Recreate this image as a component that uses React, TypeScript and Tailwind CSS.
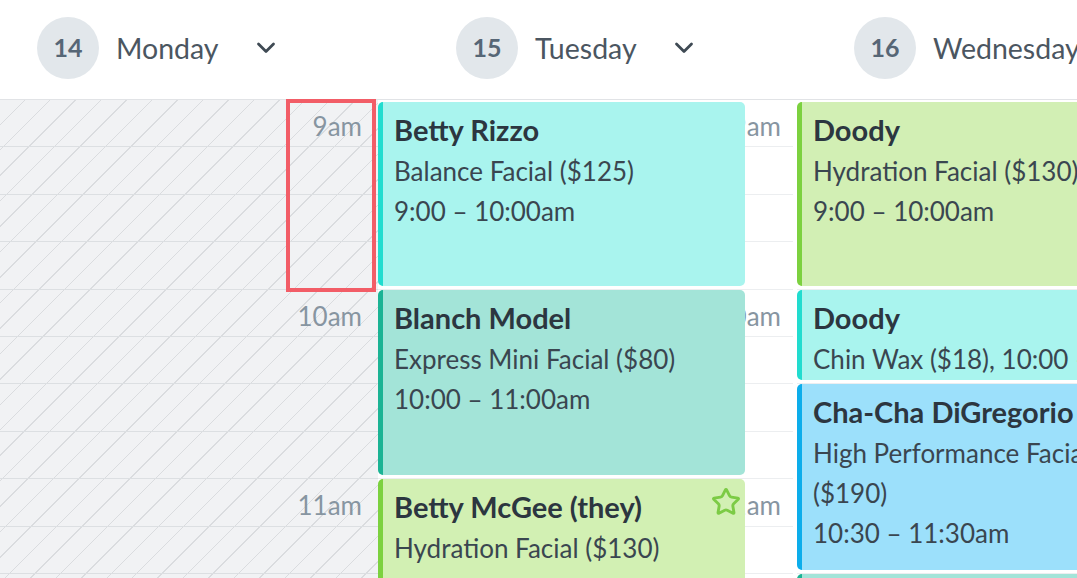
import React from "react";
import { Star } from "lucide-react";

const ROWS = [
  "row-start-1",
  "row-start-2",
  "row-start-3",
  "row-start-4",
  "row-start-5",
  "row-start-6",
  "row-start-7",
  "row-start-8",
  "row-start-9",
  "row-start-10",
  "row-start-11",
];

function Chevron() {
  return (
    <svg width="20" height="12" viewBox="0 0 20 12" fill="none">
      <path
        d="M2.5 2L10 9.5L17.5 2"
        stroke="#3f4a54"
        strokeWidth="2.8"
        strokeLinecap="round"
        strokeLinejoin="round"
      />
    </svg>
  );
}

function DayHeader({
  num,
  name,
  chevron,
  width,
}: {
  num: string;
  name: string;
  chevron: boolean;
  width: string;
}) {
  return (
    <div className={`${width} shrink-0 flex items-start pt-[17px] pl-[37px]`}>
      <div className="w-[62px] h-[62px] shrink-0 rounded-full bg-[#e2e7eb] flex items-center justify-center text-[25px] font-bold text-[#566676]">
        {num}
      </div>
      <div className="ml-[17px] h-[62px] flex items-center text-[28.5px] text-[#4b5661] whitespace-nowrap">
        {name}
      </div>
      {chevron && (
        <div className="ml-[37px] h-[62px] flex items-center">
          <Chevron />
        </div>
      )}
    </div>
  );
}

function Lines({ cls, extra }: { cls: string; extra?: string }) {
  return (
    <>
      {ROWS.map((r) => (
        <div key={r} className={`${r} col-start-1 ${extra ?? ""} border-b ${cls}`} />
      ))}
    </>
  );
}

function TimeLabel({ row, text, extra }: { row: string; text: string; extra?: string }) {
  return (
    <div
      className={`${row} col-start-1 ${extra ?? ""} justify-self-end self-start pr-4 pt-[10px] text-[26px] leading-[32px] text-[#8795a1] whitespace-nowrap`}
    >
      {text}
    </div>
  );
}

function Event({
  place,
  color,
  name,
  lines,
  star,
}: {
  place: string;
  color: string;
  name: string;
  lines: string[];
  star?: boolean;
}) {
  return (
    <div
      className={`${place} ${color} col-start-1 border-l-[5px] rounded-[5px] pl-[11px] pt-[7px] overflow-hidden min-w-0`}
    >
      <div className="flex justify-between items-start pr-[4px]">
        <div className="text-[29px] font-bold leading-[42px] text-[#2c3640] whitespace-nowrap">
          {name}
        </div>
        {star && (
          <Star size={30} strokeWidth={2.3} color="#7ccb45" className="shrink-0 mt-[1px]" />
        )}
      </div>
      {lines.map((l, i) => (
        <div key={i} className="text-[26px] leading-[40px] text-[#3a4650] whitespace-nowrap">
          {l}
        </div>
      ))}
    </div>
  );
}

export default function App() {
  return (
    <div className="w-[1077px] h-[578px] overflow-hidden bg-white [font-family:Lato,'Noto_Sans',sans-serif]">
      <div className="flex h-[100px] border-b border-[#e1e3e6]">
        <DayHeader num="14" name="Monday" chevron width="w-[419px]" />
        <DayHeader num="15" name="Tuesday" chevron width="w-[398px]" />
        <DayHeader num="16" name="Wednesday" chevron={false} width="w-[420px]" />
      </div>

      <div className="flex">
        {/* Monday */}
        <div className="w-[378px] shrink-0 grid grid-cols-1 grid-rows-[repeat(11,47.4px)] [background-image:repeating-linear-gradient(135deg,#f1f2f4_0px,#f1f2f4_17px,#dadcdf_17px,#dadcdf_18px)]">
          <Lines cls="border-[#dcdfe2]" />
          <TimeLabel row="row-start-1" text="9am" />
          <TimeLabel row="row-start-5" text="10am" />
          <TimeLabel row="row-start-9" text="11am" />
          <div className="row-start-1 row-span-4 col-start-1 justify-self-end w-[90px] mr-[2px] -mt-px -mb-[2px] border-4 border-[#f25d67]" />
        </div>

        {/* Tuesday */}
        <div className="w-[419px] shrink-0 grid grid-cols-[367px_1fr] grid-rows-[repeat(11,47.4px)] bg-white">
          <Lines cls="border-[#eceef0]" extra="col-span-2 mr-[4px]" />
          <TimeLabel row="row-start-1" text="9am" extra="col-span-2" />
          <TimeLabel row="row-start-5" text="10am" extra="col-span-2" />
          <TimeLabel row="row-start-9" text="11am" extra="col-span-2" />
          <Event
            place="row-start-1 row-span-4 mt-[2px] mb-[4px]"
            color="bg-[#a9f4ee] border-[#21dccf]"
            name="Betty Rizzo"
            lines={["Balance Facial ($125)", "9:00 – 10:00am"]}
          />
          <Event
            place="row-start-5 row-span-4 mb-[4px]"
            color="bg-[#a3e4d8] border-[#1bb394]"
            name="Blanch Model"
            lines={["Express Mini Facial ($80)", "10:00 – 11:00am"]}
          />
          <Event
            place="row-start-9 row-span-3"
            color="bg-[#d2f0b3] border-[#7cd13f]"
            name="Betty McGee (they)"
            lines={["Hydration Facial ($130)", "11:00 – 12:00pm"]}
            star
          />
        </div>

        {/* Wednesday */}
        <div className="w-[420px] shrink-0 grid grid-cols-1 grid-rows-[repeat(11,47.4px)] bg-white">
          <Lines cls="border-[#eceef0]" />
          <Event
            place="row-start-1 row-span-4 mt-[2px] mb-[4px]"
            color="bg-[#d2efb4] border-[#7cd13f]"
            name="Doody"
            lines={["Hydration Facial ($130)", "9:00 – 10:00am"]}
          />
          <Event
            place="row-start-5 row-span-2 mb-[4px]"
            color="bg-[#a9f4ee] border-[#21dccf]"
            name="Doody"
            lines={["Chin Wax ($18), 10:00 – 10:30am"]}
          />
          <Event
            place="row-start-7 row-span-4 mb-[4px]"
            color="bg-[#9ce0fb] border-[#0cadeb]"
            name="Cha-Cha DiGregorio"
            lines={["High Performance Facial", "($190)", "10:30 – 11:30am"]}
          />
          <Event
            place="row-start-11 row-span-1"
            color="bg-[#a3e4d8] border-[#1bb394]"
            name="Sandy Olsson"
            lines={["Express Mini Facial ($80)"]}
          />
        </div>
      </div>
    </div>
  );
}
